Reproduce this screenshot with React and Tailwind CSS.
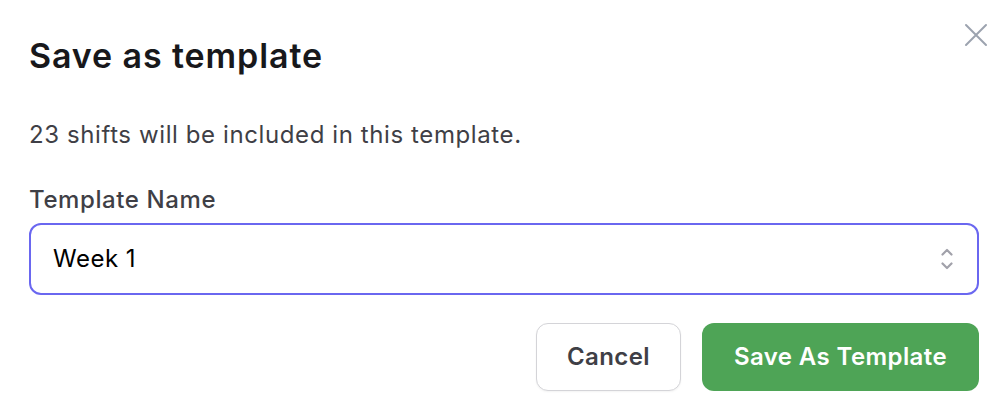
import React from 'react';

function CloseIcon() {
  return (
    <svg width="24" height="24" viewBox="0 0 24 24" fill="none" stroke="currentColor" strokeWidth="2" strokeLinecap="round">
      <path d="M2 2L22 22M22 2L2 22" />
    </svg>
  );
}

function Chevrons() {
  return (
    <svg width="12" height="22" viewBox="0 0 12 22" fill="none" stroke="currentColor" strokeWidth="2.2" strokeLinecap="round" strokeLinejoin="round">
      <path d="M1.5 6.5L6 2L10.5 6.5" />
      <path d="M1.5 15.5L6 20L10.5 15.5" />
    </svg>
  );
}

export default function App() {
  return (
    <div className="w-[1008px] h-[408px] bg-white relative font-['Inter',sans-serif]">
      <button className="absolute right-[20px] top-[23px] text-[#9ca3af]">
        <CloseIcon />
      </button>

      <div className="flex flex-col pl-[29px] pr-[29px]">
        <h2 className="mt-[34px] text-[34px] leading-[44px] font-semibold text-[#18181b] tracking-[0.9px]">
          Save as template
        </h2>

        <p className="mt-[41px] text-[24px] leading-[32px] text-[#3f3f46] tracking-[0.6px]">
          23 shifts will be included in this template.
        </p>

        <label className="mt-[33px] text-[24px] leading-[32px] font-medium text-[#3f3f46] tracking-[0.6px]">
          Template Name
        </label>

        <div className="mt-[7px] h-[72px] rounded-[12px] border-2 border-[#6a67f0] flex items-center justify-between pl-[22px] pr-[24px]">
          <span className="text-[24px] text-black tracking-[0.5px]">Week 1</span>
          <span className="text-[#a1a1aa]">
            <Chevrons />
          </span>
        </div>

        <div className="mt-[28px] flex justify-end gap-[21px]">
          <button className="w-[145px] h-[68px] rounded-[12px] border border-[#d4d4d8] bg-white text-[24px] font-semibold text-[#3f3f46] tracking-[0.4px] shadow-[0_1px_2px_rgba(0,0,0,0.05)]">
            Cancel
          </button>
          <button className="w-[277px] h-[68px] rounded-[12px] bg-[#4ea456] text-[24px] font-semibold text-white tracking-[0.4px]">
            Save As Template
          </button>
        </div>
      </div>
    </div>
  );
}
